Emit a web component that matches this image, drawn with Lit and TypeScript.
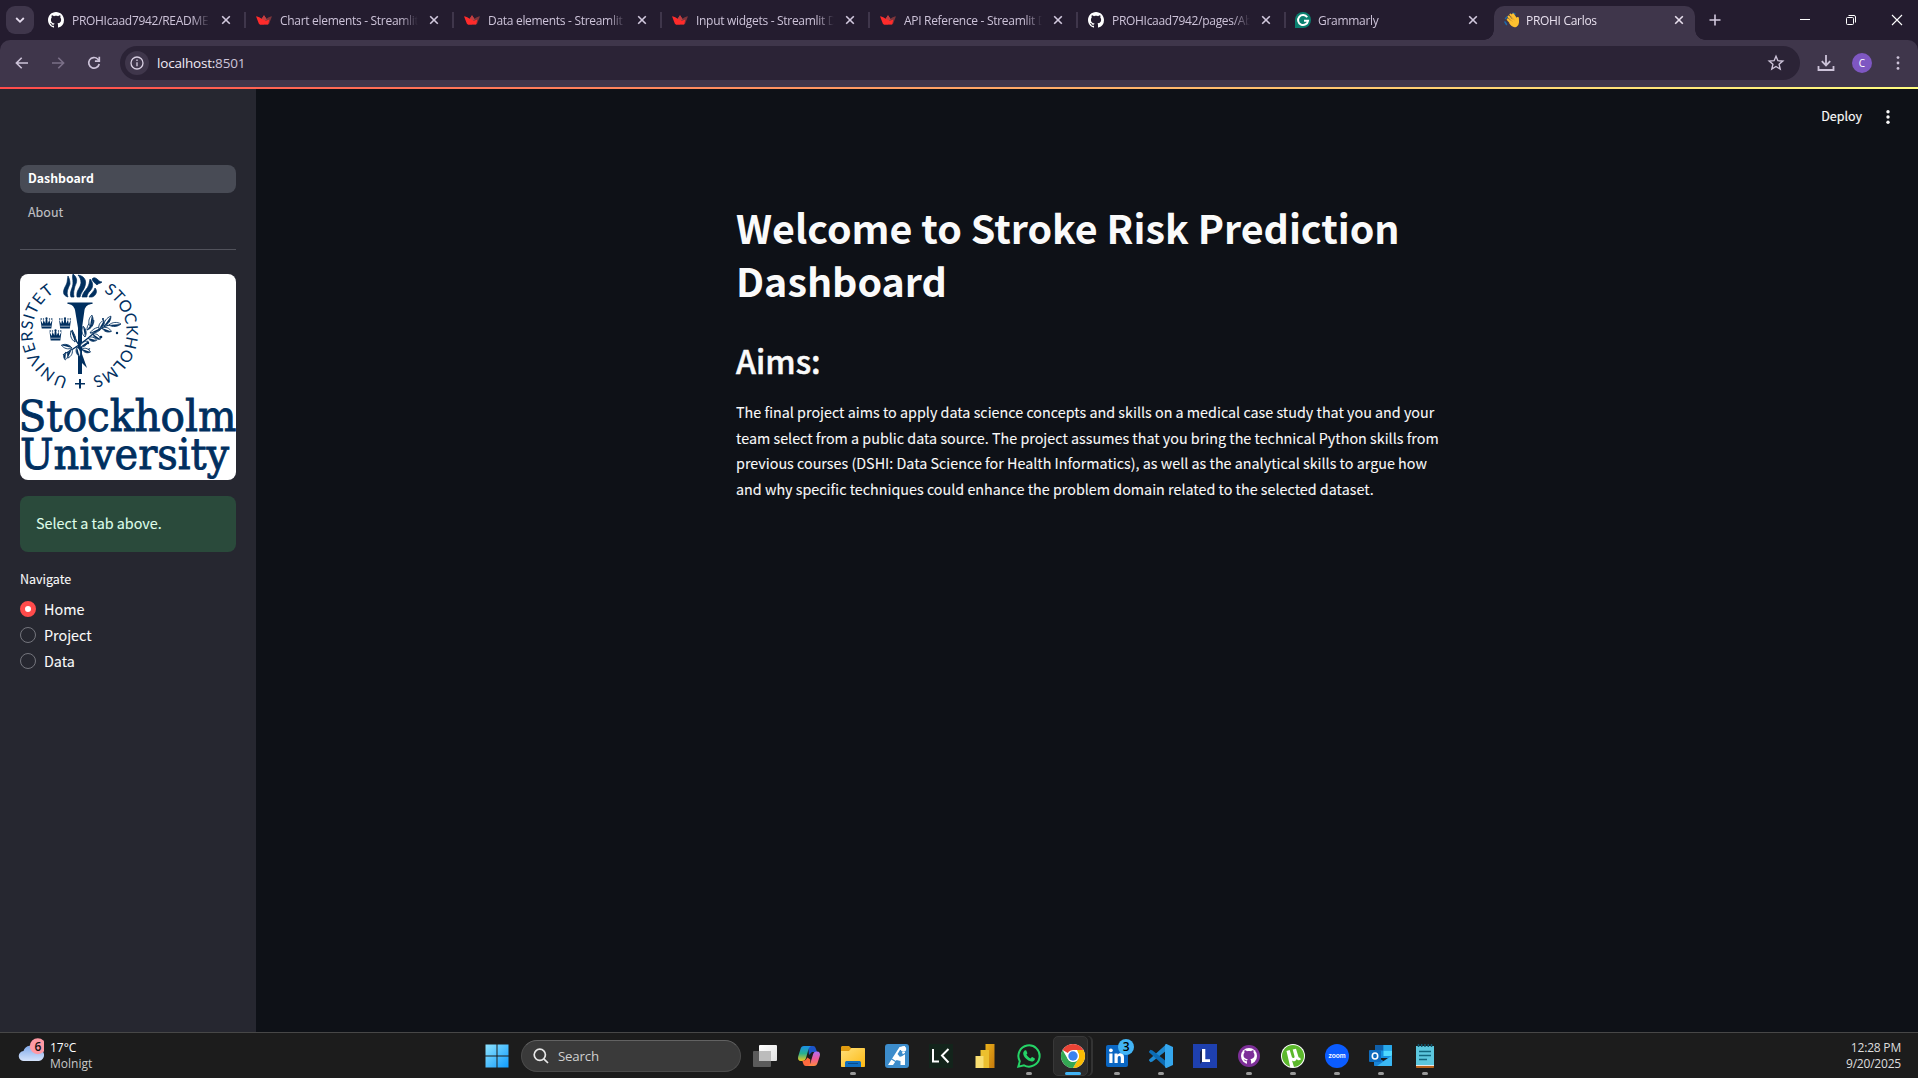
import { LitElement, html, css, svg, nothing } from "lit";
import { customElement } from "lit/decorators.js";
import { classMap } from "lit/directives/class-map.js";

const githubPath =
  "M8 0C3.58 0 0 3.58 0 8c0 3.54 2.29 6.53 5.47 7.59.4.07.55-.17.55-.38 0-.19-.01-.82-.01-1.49-2.01.37-2.53-.49-2.69-.94-.09-.23-.48-.94-.82-1.13-.28-.15-.68-.52-.01-.53.63-.01 1.08.58 1.23.82.72 1.21 1.87.87 2.33.66.07-.52.28-.87.51-1.07-1.78-.2-3.64-.89-3.64-3.95 0-.87.31-1.59.82-2.15-.08-.2-.36-1.02.08-2.12 0 0 .67-.21 2.2.82.64-.18 1.32-.27 2-.27s1.36.09 2 .27c1.53-1.04 2.2-.82 2.2-.82.44 1.1.16 1.92.08 2.12.51.56.82 1.27.82 2.15 0 3.07-1.87 3.75-3.65 3.95.29.25.54.73.54 1.48 0 1.07-.01 1.93-.01 2.2 0 .21.15.46.55.38A8.01 8.01 0 0 0 16 8c0-4.42-3.58-8-8-8Z";

const favicons: Record<string, unknown> = {
  github: svg`<path fill="#fff" d=${githubPath} />`,
  streamlit: svg`<path fill="#ff2b2b" d="M.5 4.2c2 .6 3.600 1.400 5.200 2.500L8 3.200l2.300 3.500L8 12.600H4.200c-.6 0-1.100-.3-1.300-.8L.2 4.700c-.1-.3 0-.5.3-.5Z"/><path fill="#7d353b" d="M15.500 4.200c-2 .6-3.600 1.400-5.200 2.500L8 12.600h3.800c.6 0 1.100-.3 1.300-.8l2.700-7.100c.1-.3 0-.5-.3-.5Z"/><path fill="#bd4043" d="M8 3.200 5.700 6.700l4.200 2.100.9-1.400Z"/><path fill="#ff2b2b" d="M2.500 7.500 9.500 9l3.800-1.500-1 4.400c-.2.500-.5.700-1 .7H4Z"/>`,
  grammarly: svg`<path fill="#0b8070" d="M0 16V8a8 8 0 1 1 8 8Z"/><path fill="none" stroke="#fff" stroke-width="2" d="M12.200 5.200A5 5 0 1 0 13 8.800H9"/>`,
  wave: svg`<path d="M1.500 6.500 3 5M1 10l1.500 2.500M9 1.200l2 .8" stroke="#1f6aa8" stroke-width="1.500" stroke-linecap="round"/><g stroke="#fdc02f" stroke-linecap="round" stroke-width="2.200"><path d="m4.600 4.600 4.500 5.400M6.500 2.600l4.400 5.600M9 2.300l3.400 5M3.800 7.500 8 12M13.800 6v4"/></g><path fill="#fdc02f" d="M6 9.500 11 5l3.700 2.500c.9 4-.5 7.200-3.500 7.700-2.500.3-4.500-1.600-5.900-3.600Z"/><path d="m6.600 3.400 4 5M4.900 5.600l3.700 4.300" stroke="#d9902a" stroke-width=".5" fill="none"/>`,
};

const tabs = [
  { icon: "github", title: "PROHIcaad7942/README.md" },
  { icon: "streamlit", title: "Chart elements - Streamlit Docs" },
  { icon: "streamlit", title: "Data elements - Streamlit Docs" },
  { icon: "streamlit", title: "Input widgets - Streamlit Docs" },
  { icon: "streamlit", title: "API Reference - Streamlit Docs" },
  { icon: "github", title: "PROHIcaad7942/pages/About.py" },
  { icon: "grammarly", title: "Grammarly" },
  { icon: "wave", title: "PROHI Carlos", active: true },
];

@customElement("browser-bar")
export class BrowserBar extends LitElement {
  static styles = css`
    :host {
      display: block;
      background: #241c2f;
      font-family: "Open Sans", "Noto Sans", sans-serif;
      color: #cdc3d9;
    }
    .strip {
      display: flex;
      height: 40px;
      padding-left: 6px;
      box-sizing: border-box;
    }
    .drop {
      width: 28px;
      height: 28px;
      margin-top: 6px;
      border-radius: 9px;
      background: #3f364b;
      display: grid;
      place-items: center;
    }
    .tab {
      box-sizing: border-box;
      width: 208px;
      height: 34px;
      margin-top: 6px;
      padding: 0 12px 6px 10px;
      display: flex;
      align-items: center;
      position: relative;
    }
    .drop + .tab {
      margin-left: 4px;
    }
    .tab.last {
      width: 207px;
      padding-left: 9px;
    }
    .tab.sep::after {
      content: "";
      position: absolute;
      right: 0;
      top: 6px;
      width: 2px;
      height: 16px;
      background: #3f364b;
    }
    .tab.active {
      background: #3f364b;
      border-radius: 10px 10px 0 0;
      width: 201px;
      margin-left: 1px;
      padding-left: 10px;
      padding-right: 8px;
      color: #e8e0ee;
    }
    .tab.active::before,
    .tab.active::after {
      content: "";
      position: absolute;
      bottom: 0;
      width: 10px;
      height: 10px;
    }
    .tab.active::before {
      left: -10px;
      background: radial-gradient(circle at 0 0, transparent 9.500px, #3f364b 10px);
    }
    .tab.active::after {
      right: -10px;
      background: radial-gradient(circle at 100% 0, transparent 9.500px, #3f364b 10px);
    }
    .fav {
      width: 16px;
      height: 16px;
      flex: none;
    }
    .title {
      flex: 1;
      margin: 2px 8px 0;
      overflow: hidden;
      white-space: nowrap;
      font-size: 12px;
      line-height: 18px;
      letter-spacing: -0.300px;
      -webkit-mask-image: linear-gradient(90deg, #000 calc(100% - 18px), transparent 100%);
      mask-image: linear-gradient(90deg, #000 calc(100% - 18px), transparent 100%);
    }
    .active .title {
      margin-left: 6px;
    }
    .last .title {
      margin-left: 7px;
    }
    .close {
      width: 16px;
      height: 16px;
      flex: none;
    }
    .plus {
      margin: 12px 0 0 12px;
    }
    .window {
      margin-left: auto;
      display: flex;
      gap: 30px;
      padding: 12px 13px 0 0;
    }
    .toolbar {
      box-sizing: border-box;
      height: 47px;
      background: #3f364b;
      border-radius: 10px 10px 0 0;
      padding: 0 10px 1px 12px;
      display: flex;
      align-items: center;
    }
    .nav {
      width: 20px;
      height: 20px;
      margin-right: 16px;
    }
    .omni {
      box-sizing: border-box;
      flex: 1;
      height: 34px;
      border-radius: 17px;
      background: #2b2336;
      display: flex;
      align-items: center;
      padding: 0 14px 0 5px;
      margin-right: 16px;
    }
    .info {
      width: 24px;
      height: 24px;
      border-radius: 50%;
      background: #3f364b;
      display: grid;
      place-items: center;
      margin-right: 8px;
    }
    .url {
      flex: 1;
      font-size: 13.500px;
      letter-spacing: -0.200px;
      color: #cdc3d9;
    }
    .host {
      color: #f1eaf5;
    }
    .tools {
      display: flex;
      align-items: center;
      gap: 16px;
    }
    .avatar {
      width: 20px;
      height: 20px;
      border-radius: 50%;
      background: #7e57c2;
      color: #fff;
      font-size: 10px;
      line-height: 20px;
      text-align: center;
    }
  `;

  render() {
    return html`
      <div class="strip">
        <div class="drop">
          <svg width="10" height="10" viewBox="0 0 10 10" fill="none" stroke="#e5dcee" stroke-width="1.800"><path d="m1.200 3 3.800 3.800L8.800 3" /></svg>
        </div>
        ${tabs.map(
          (t, i) => html`<div class=${classMap({ tab: true, active: !!t.active, sep: i < 6, last: i === 6 })}>
            <svg class="fav" viewBox="0 0 16 16">${favicons[t.icon]}</svg>
            <span class="title">${t.title}</span>
            <svg class="close" viewBox="0 0 16 16" fill="none" stroke=${t.active ? "#e8e0ee" : "#d2c9de"} stroke-width="1.600"><path d="m4.200 4.200 7.600 7.600M11.800 4.200l-7.600 7.600" /></svg>
          </div>`
        )}
        <svg class="plus" width="16" height="16" viewBox="0 0 16 16" stroke="#d2c9de" stroke-width="1.600"><path d="M8 2.500v11M2.500 8h11" /></svg>
        <div class="window">
          <svg width="16" height="16" viewBox="0 0 16 16" stroke="#fff"><path d="M3 7.500h10" /></svg>
          <svg width="16" height="16" viewBox="0 0 16 16" stroke="#fff" fill="none"><rect x="3.500" y="5.500" width="7" height="7" rx="1" /><path d="M5.500 3.500h5.500a1.500 1.500 0 0 1 1.500 1.500v5.500" /></svg>
          <svg width="16" height="16" viewBox="0 0 16 16" stroke="#fff" stroke-width="1.100"><path d="m3 3 10 10M13 3 3 13" /></svg>
        </div>
      </div>
      <div class="toolbar">
        <svg class="nav" viewBox="0 0 20 20" fill="none" stroke="#cdc3d9" stroke-width="1.600"><path d="M16 10H4.500M9.700 4.700 4.400 10l5.300 5.300" /></svg>
        <svg class="nav" viewBox="0 0 20 20" fill="none" stroke="#7b7088" stroke-width="1.600"><path d="M4 10h11.500M10.300 4.700l5.300 5.300-5.300 5.300" /></svg>
        <svg class="nav" viewBox="0 0 20 20" fill="none" stroke="#cdc3d9" stroke-width="1.700"><path d="M15.200 11A5.300 5.300 0 1 1 13.700 6L15 7.400" /><path d="M15.300 3.800v4.400h-4.400" /></svg>
        <div class="omni">
          <div class="info">
            <svg width="14" height="14" viewBox="0 0 14 14" fill="none" stroke="#d8cfe2" stroke-width="1.300"><circle cx="7" cy="7" r="6" /><path d="M7 6.300v4M7 3.500v1.500" /></svg>
          </div>
          <span class="url"><span class="host">localhost:</span>8501</span>
          <svg width="20" height="20" viewBox="0 0 20 20" fill="none" stroke="#cdc3d9" stroke-width="1.400"><path d="m10 3.200 1.900 4.500 4.900.4-3.700 3.200 1.100 4.800L10 13.500l-4.200 2.600 1.100-4.800-3.700-3.200 4.900-.4Z" /></svg>
        </div>
        <div class="tools">
          <svg width="20" height="20" viewBox="0 0 20 20" fill="none" stroke="#cdc3d9" stroke-width="1.800"><path d="M10 2v10M5.800 8.200l4.200 4.200 4.200-4.200M2.500 13v4h15v-4" /></svg>
          <div class="avatar">C</div>
          <svg width="20" height="20" viewBox="0 0 20 20" fill="#cdc3d9"><circle cx="10" cy="4.600" r="1.400" /><circle cx="10" cy="10" r="1.400" /><circle cx="10" cy="15.400" r="1.400" /></svg>
        </div>
      </div>
    `;
  }
}

const crown = svg`<path d="M0 2.500 2.200 7 3 2.800 4.800 6.600 5.300 1.500h1.400l.5 5.100L9 2.800 9.800 7 12 2.500 10.800 11.500H1.200Z"/><circle cx="6" cy="1.300" r="1.100"/><circle cx=".7" cy="2" r=".8"/><circle cx="11.300" cy="2" r=".8"/><circle cx="3" cy="2" r=".7"/><circle cx="9" cy="2" r=".7"/><path d="M1.300 9.200h9.400" stroke="#fff" stroke-width=".6"/>`;

const leaf = (x: number, y: number, angle: number, len = 9) =>
  svg`<g transform="translate(${x} ${y}) rotate(${angle})"><path d="M0 0C${len * 0.3} -2.800 ${len * 0.7} -2.600 ${len} 0C${len * 0.7} 2.600 ${len * 0.3} 2.800 0 0Z" fill="#fff" stroke="#002f5f" stroke-width=".8"/><path d="M0 0C${len * 0.4} 2.700 ${len * 0.7} 2.200 ${len} 0Z" fill="#002f5f"/></g>`;

@customElement("university-logo")
export class UniversityLogo extends LitElement {
  static styles = css`
    :host {
      display: block;
      height: 206px;
      border-radius: 8px;
      background: #fff;
      overflow: hidden;
    }
    svg {
      display: block;
    }
    .ring {
      font-family: Lato, sans-serif;
      font-size: 16px;
    }
    .name {
      font-family: "DejaVu Serif", serif;
      font-size: 43px;
      stroke: #002f5f;
      stroke-width: 0.900px;
    }
  `;

  render() {
    return html`<svg width="216" height="206" viewBox="0 0 216 206" fill="#002f5f">
      <defs>
        <path id="right" d="M83.700 17.700A47 47 0 0 1 70.900 103.600" />
        <path id="left" d="M48.100 103.600A47 47 0 0 1 35.300 17.700" />
      </defs>
      <text class="ring" textLength="109"><textPath href="#right" textLength="109">STOCKHOLMS</textPath></text>
      <text class="ring" textLength="109"><textPath href="#left" textLength="109">UNIVERSITET</textPath></text>
      <path d="M59 105h2v4h4v1.500h-4v4h-2v-4h-4v-1.500h4Z" />
      <path transform="translate(0 -1)" stroke="#002f5f" stroke-width=".7" d="M45 14c-3 6-1 9 3 10-2-5 0-8 2-13 0-4-1-6-2-8-1 4 0 6-3 11ZM51 24c-2-5 2-9 2-14 0-4-1-6 0-9 5 4 4 8 2 12-1 4-2 7-1 11ZM57 24c-1-7 3-8 4-14 0-3-1-6-3-8 6 1 9 5 7 11-1 4-4 6-5 11ZM62 24c1-6 6-8 7-13l1-5c4 4 3 9 0 12-2 2-3 4-3 6ZM69 24c1-3 5-5 6-9 3 3 1 8-3 9ZM72 6c4-4 6 3 10 3-2 2-4 1-5 3-2-2-4-3-5-6Z" />
      <path d="M47.500 28.500h25v1.500c-4 0-7 2-8 6L62 54v46h-4V54l-3-18c-1-4-4-6-7.500-6Z" />
      <g transform="translate(20.500 43)">${crown}</g>
      <g transform="translate(39 43)">${crown}</g>
      <g transform="translate(29.500 55)">${crown}</g>
      <path d="m62 80 5 14-5-5Z" />
      <path d="M43 81c9-5 20-12 31-22 8-7 15-9 24-9M52 56c3 5 2 9 8 17s8 1 10 2" fill="none" stroke="#002f5f" stroke-width="1.200" />
      ${leaf(65, 63, -100, 11)}${leaf(67, 56, -55, 12)}${leaf(70, 59, -25, 14)}${leaf(70, 52, -80, 11)}
      ${leaf(79, 55, -60, 10)}${leaf(84, 52, -55, 12)}${leaf(89, 51, -5, 12)}${leaf(82, 54, 20, 10)}
      ${leaf(73, 60, 35, 9)}${leaf(68, 64, 15, 9)}${leaf(55, 68, -110, 12)}${leaf(52, 74, -165, 11)}
      ${leaf(52, 75, 115, 10)}${leaf(57, 73, 75, 10)}${leaf(60, 73, -35, 10)}${leaf(62, 75, 20, 9)}${leaf(46, 78, 95, 8)}
      <circle cx="81" cy="63" r="1.300" /><circle cx="97" cy="59" r="1.200" /><circle cx="68" cy="69" r="1.200" /><circle cx="83" cy="45" r="1.100" />
      <text class="name" x="-1.500" y="157" textLength="218" lengthAdjust="spacingAndGlyphs">Stockholm</text>
      <text class="name" x="0" y="194.500" textLength="209" lengthAdjust="spacingAndGlyphs">University</text>
    </svg>`;
  }
}

@customElement("side-nav")
export class SideNav extends LitElement {
  static styles = css`
    :host {
      display: flex;
      flex-direction: column;
      box-sizing: border-box;
      width: 256px;
      flex: none;
      padding: 76px 20px 0;
      background: #262730;
      color: #fafafa;
      font-family: "Noto Sans CJK SC", sans-serif;
      -webkit-text-stroke: 0.080px currentColor;
    }
    .link {
      box-sizing: border-box;
      height: 28px;
      line-height: 26px;
      padding-left: 8px;
      border-radius: 8px;
      font-size: 12.500px;
      color: #c0c1c6;
      margin-bottom: 6px;
    }
    .current {
      background: #484b55;
      color: #fff;
      font-weight: 700;
      font-size: 12.300px;
      -webkit-text-stroke: 0;
    }
    hr {
      width: 100%;
      height: 1px;
      border: 0;
      background: #51525b;
      margin: 16px 0 24px;
    }
    .note {
      margin-top: 16px;
      height: 56px;
      box-sizing: border-box;
      padding-left: 16px;
      border-radius: 8px;
      background: #2a4a3b;
      color: #dffde9;
      font-size: 14.350px;
      line-height: 54px;
    }
    .label {
      margin: 19px 0 9px;
      font-size: 12.500px;
      line-height: 16px;
    }
    .option {
      display: flex;
      align-items: center;
      gap: 8px;
      height: 26px;
      font-size: 14.350px;
      line-height: 24px;
    }
    .dot {
      box-sizing: border-box;
      width: 16px;
      height: 16px;
      border-radius: 50%;
      border: 1px solid #74757d;
    }
    .picked {
      border: 5px solid #ff4b4b;
      background: #fff;
    }
  `;

  render() {
    return html`
      <div class="link current">Dashboard</div>
      <div class="link">About</div>
      <hr />
      <university-logo></university-logo>
      <div class="note">Select a tab above.</div>
      <div class="label">Navigate</div>
      ${["Home", "Project", "Data"].map(
        (name, i) => html`<div class="option"><span class=${classMap({ dot: true, picked: i === 0 })}></span><span>${name}</span></div>`
      )}
    `;
  }
}

@customElement("main-page")
export class MainPage extends LitElement {
  static styles = css`
    :host {
      flex: 1;
      display: flex;
      flex-direction: column;
      background: #0e1117;
      color: #fafafa;
      font-family: "Noto Sans CJK SC", sans-serif;
    }
    .top {
      display: flex;
      justify-content: flex-end;
      align-items: center;
      gap: 16px;
      height: 56px;
      padding-right: 20px;
      font-size: 12.500px;
    }
    .deploy {
      line-height: 20px;
      padding-bottom: 3px;
      -webkit-text-stroke: 0.150px currentColor;
    }
    .content {
      width: 736px;
      padding: 56px 0 0 480px;
    }
    h1 {
      margin: 0;
      font-size: 39.400px;
      line-height: 52.800px;
      font-weight: 700;
      white-space: nowrap;
    }
    h2 {
      margin: 32px 0 17px;
      font-size: 32.200px;
      line-height: 43.200px;
      font-weight: 500;
      -webkit-text-stroke: 0.500px currentColor;
    }
    p {
      margin: 0;
      font-size: 14.335px;
      line-height: 25.700px;
      white-space: nowrap;
      -webkit-text-stroke: 0.080px currentColor;
    }
  `;

  render() {
    return html`
      <div class="top">
        <span class="deploy">Deploy</span>
        <svg width="20" height="20" viewBox="0 0 20 20" fill="#fafafa"><circle cx="10" cy="4.800" r="1.700" /><circle cx="10" cy="10" r="1.700" /><circle cx="10" cy="15.200" r="1.700" /></svg>
      </div>
      <div class="content">
        <h1>Welcome to Stroke Risk Prediction<br />Dashboard</h1>
        <h2>Aims:</h2>
        <p>
          The final project aims to apply data science concepts and skills on a medical case study that you and your<br />
          team select from a public data source. The project assumes that you bring the technical Python skills from<br />
          previous courses (DSHI: Data Science for Health Informatics), as well as the analytical skills to argue how<br />
          and why specific techniques could enhance the problem domain related to the selected dataset.
        </p>
      </div>
    `;
  }
}

const apps: { art: unknown; open?: boolean; front?: boolean }[] = [
  {
    art: svg`<defs><linearGradient id="tv" x1="0" y1="0" x2="1" y2="1"><stop offset="0" stop-color="#fff"/><stop offset="1" stop-color="#e2e2e2"/></linearGradient></defs><rect x="6" y="1" width="18" height="16" rx="1" fill="url(#tv)"/><rect x="0" y="7" width="18" height="16" rx="1" fill="#5b5b5b"/><path d="M6 7h12v10H6Z" fill="#bcbcbc"/>`,
  },
  {
    art: svg`<defs><linearGradient id="ca" x1="0" y1="0" x2="0" y2="1"><stop offset="0" stop-color="#1a8fe8"/><stop offset=".5" stop-color="#28b08f"/><stop offset="1" stop-color="#f0c91c"/></linearGradient><linearGradient id="cb" x1="0" y1="0" x2="0" y2="1"><stop offset="0" stop-color="#b06df5"/><stop offset=".5" stop-color="#ee5a9a"/><stop offset="1" stop-color="#ff8a3c"/></linearGradient></defs><path fill="#1b54c8" d="M11 2h5c2 0 2.500 1.500 3 3l1 3h-5l-3 3Z"/><path fill="url(#ca)" d="M7 2h7c-2 1-2.500 3-3 5l-2 7c-.6 2-1.600 3-3.500 3H4c-2.500 0-3.500-2-2.800-4.500L3.500 5C4.100 3 5 2 7 2Z"/><path fill="#ff6a3d" d="M13 22H9c-2 0-2.500-1.500-3-3l-.7-2.500c3 .5 4-.8 5-3l3 2Z"/><path fill="url(#cb)" d="M17 22h-6c2-1 2.500-3 3-5l2-6.500C16.600 8.500 17.500 7.500 19.500 7.500H20c2.500 0 3.500 2 2.800 4.500L20.500 19c-.6 2-1.500 3-3.500 3Z"/>`,
  },
  {
    art: svg`<defs><linearGradient id="fo" x1="0" y1="0" x2="1" y2="1"><stop offset="0" stop-color="#ffe07a"/><stop offset="1" stop-color="#fdb913"/></linearGradient></defs><path fill="#e09b10" d="M0 3.500C0 2.600.6 2 1.500 2H8l2 2h4v4H0Z"/><path fill="url(#fo)" d="M0 7h8l2.500-3H23c.6 0 1 .4 1 1v17c0 .6-.4 1-1 1H1c-.6 0-1-.4-1-1Z"/><path fill="#0f6fc0" d="M4 23v-4.500C4 17.500 5 17 6 17h12c1 0 2 .5 2 1.500V23Z"/><path stroke="#0a4b86" d="M7 19.500h10"/>`,
    open: true,
  },
  {
    art: svg`<rect width="24" height="24" rx="3" fill="#3c8ccb"/><path fill="#fff" d="M3 21 14.500 3 20 2v19h-4.500v-4l-4-1-3.500 5Z"/><path fill="#3c8ccb" d="m15 6-2.500 4 2.500 3 3-2-1-3h4V6Z"/><circle cx="18.500" cy="5" r="2.700" fill="#fff"/><path stroke="#3c8ccb" stroke-width="1.300" d="m5 14 8 5M16 12l5-3"/>`,
  },
  {
    art: svg`<rect width="24" height="24" fill="#13241b"/><path fill="none" stroke="#fff" stroke-width="2" d="M4 5v12.500h6M19.500 5 13 11.500l6.500 7"/>`,
  },
  {
    art: svg`<defs><linearGradient id="pb" x1="0" y1="0" x2="1" y2="1"><stop offset="0" stop-color="#e9b11b"/><stop offset="1" stop-color="#c77a0c"/></linearGradient></defs><path fill="url(#pb)" d="M12.500 0h9v24h-9Z"/><path fill="#ecc02f" d="M7.500 6h8.500v18H7.500Z"/><path fill="#f9df72" d="M2.500 12h8v12h-8Z"/>`,
  },
  {
    art: svg`<path fill="none" stroke="#25d366" stroke-width="2" d="m1.300 22.700 1.500-5.500A10.600 10.600 0 1 1 7 21.300Z"/><path fill="#25d366" d="M8.500 6.200c.4 0 .7 0 .9.500l.9 2.200c.2.500-.6 1.300-.9 1.700 1 1.900 2.300 3 4.200 3.900.5-.4 1.200-1.600 1.600-1.400l2.300 1.100c.5.200.4.900.2 1.500-.5 1.300-2 1.900-3.200 1.700-4.200-.7-7.900-4.400-8.300-7.700-.1-1.400.9-3.500 2.300-3.500Z"/>`,
    open: true,
  },
  {
    art: svg`<circle cx="12" cy="12" r="12" fill="#fff"/><path fill="#ea4335" d="M12 12 1.600 6A12 12 0 0 1 22.400 6H12Z"/><path fill="#fbbc04" d="M22.400 6A12 12 0 0 1 12 24l5.200-9A6 6 0 0 0 17.200 9L16 6Z"/><path fill="#34a853" d="M12 24A12 12 0 0 1 1.600 6l5.200 9A6 6 0 0 0 15 17.200l2.200-2.200Z"/><circle cx="12" cy="12" r="6" fill="#fff"/><circle cx="12" cy="12" r="4.700" fill="#3b82f0"/>`,
    open: true,
    front: true,
  },
  {
    art: svg`<rect x="1" y="1" width="22" height="22" rx="2" fill="#0a66c2"/><path fill="#fff" d="M4.300 9.500h3.200V19H4.300ZM9.500 9.500h3v1.300c.6-1 1.600-1.500 3-1.500 2.900 0 3.500 1.900 3.500 4.400V19h-3.200v-4.700c0-1.200-.1-2.300-1.500-2.300s-1.600 1.100-1.600 2.300V19H9.500Z"/><circle cx="5.900" cy="6.300" r="1.900" fill="#fff"/><circle cx="21" cy="3" r="8" fill="#42b4f5"/><text x="21" y="7.300" text-anchor="middle" font-size="12" font-weight="600" font-family="Open Sans" fill="#000">3</text>`,
    open: true,
  },
  {
    art: svg`<path fill="#1f8ad2" d="M17.500 0v6.500L3.500 17.500 1.500 18.300 0 16.500v-.8Z"/><path fill="#0c6cb5" d="M17.500 24v-6.500L3.500 6.500 1.500 5.700 0 7.500v.8Z"/><path fill="#35a7ee" d="M17.500 0 24 3v18l-6.500 3c-1 0-1.500-.7-1.500-1.500v-21C16 .7 16.500 0 17.500 0Z"/>`,
    open: true,
  },
  {
    art: svg`<rect width="24" height="24" fill="#1e40af"/><path fill="#172554" d="m9 18-2 2V8l2-3Z"/><path fill="#fff" d="M9 5h3.300v10.300H17V18H9Z"/>`,
  },
  {
    art: svg`<circle cx="12" cy="12" r="11" fill="#7d2f98"/><circle cx="12" cy="12" r="8" fill="#fff"/><path fill="#7d2f98" d="M10 20v-2.700c-2.500.2-2.500-1.300-3.500-1.700 2.200-.6 1.800 1.500 3.600.8l.6-1.100c-5.200-.6-4.600-5.500-3.200-6.500-.3-.8-.2-1.900.2-2.500 1 0 1.700.5 2.200.9 1.500-.3 2.700-.3 4.200 0 .5-.4 1.300-.9 2.200-.9.400.6.500 1.700.2 2.500 1.400 1 2 5.900-3.200 6.500.7.600.8 1.200.8 2.200V20Z"/>`,
    open: true,
  },
  {
    art: svg`<circle cx="12" cy="12" r="12" fill="#fff"/><circle cx="12" cy="12" r="11" fill="#5cb82c"/><path fill="#fff" d="m5.500 7 3.200-1 2.200 7c.6 1.800 3.100 1.200 2.600-.8L11.700 5.500 15 4.700l2.500 8.300c.2.800 1 .9 1.700.7l.6 2c-1.800.8-3.300.5-4-.8-1 2.300-3.500 2.900-4.800 1.600l2 6.500-3.700.5Z"/>`,
    open: true,
  },
  {
    art: svg`<circle cx="12" cy="12" r="12" fill="#0b5cff"/><text x="12" y="14.300" text-anchor="middle" font-size="7" font-weight="700" textLength="17" font-family="Lato" fill="#fff">zoom</text>`,
    open: true,
  },
  {
    art: svg`<rect x="6" y="1" width="17" height="13" rx="1" fill="#1490df"/><path fill="#0f5fa9" d="M6 1h8.500v5.500H6Z"/><path fill="#50d9ff" d="M14.500 6.500H23V12h-8.500Z"/><path fill="#28a8ea" d="M14.500 1H22c.6 0 1 .4 1 1v4.500h-8.500Z"/><path fill="#1784d8" d="M5 11.500 14.500 17 23 11.500V21c0 .6-.4 1-1 1H6c-.6 0-1-.4-1-1Z"/><path fill="#3bb8f3" d="m23 11.500-15 10.500H22c.6 0 1-.4 1-1Z"/><rect x="0" y="6" width="12" height="12" rx="1" fill="#0f6cbd"/><ellipse cx="6" cy="12" rx="2.700" ry="3" fill="none" stroke="#fff" stroke-width="1.600"/>`,
    open: true,
  },
  {
    art: svg`<path fill="#b7611b" d="M3 20h18v3c0 .6-.4 1-1 1H4c-.6 0-1-.4-1-1Z"/><path fill="#e8e8e8" d="M3 19h18v3H3Z"/><path fill="#5cc7de" d="M3 2h18v19H3Z"/><path stroke="#12677f" stroke-width="1.500" d="M6 7.500h12M6 11.500h12M6 15.500h8"/><path stroke="#0f556b" stroke-width="1.500" d="M5.500 0v3M8.700 0v3M12 0v3M15.300 0v3M18.500 0v3"/>`,
    open: true,
  },
];

@customElement("task-bar")
export class TaskBar extends LitElement {
  static styles = css`
    :host {
      box-sizing: border-box;
      display: grid;
      grid-template-columns: 484.500px 1fr auto;
      height: 46px;
      border-top: 1px solid #474747;
      background: #1c1c1c;
      color: #fff;
      font-family: "Open Sans", "Noto Sans", sans-serif;
      font-size: 12px;
      line-height: 16px;
      letter-spacing: -0.200px;
    }
    .weather {
      display: flex;
      gap: 6px;
      padding: 5px 0 0 18px;
      letter-spacing: 0;
    }
    .lines {
      padding-top: 2px;
    }
    .dim {
      color: #c8c8c8;
    }
    .center {
      display: flex;
      align-items: center;
    }
    .search {
      box-sizing: border-box;
      width: 220px;
      height: 32px;
      margin: 0 2px 0 12.500px;
      border: 1px solid #4b4b4b;
      border-top-color: #626262;
      border-radius: 16px;
      background: #3a3a3a;
      display: flex;
      align-items: center;
      gap: 9px;
      padding-left: 11px;
      font-size: 13.300px;
      color: #cfcfcf;
    }
    .app {
      width: 44px;
      height: 45px;
      display: grid;
      grid-template-rows: 39px 6px;
      justify-items: center;
    }
    .tile {
      width: 36px;
      height: 40px;
      margin-top: 3px;
      display: grid;
      place-items: center;
      border-radius: 5px;
    }
    .front .tile {
      box-sizing: border-box;
      width: 35px;
      margin-right: 5px;
      padding-left: 5px;
      background: #2b2b2b;
      border: 1px solid #383838;
      box-shadow: 3px 0 0 #1c1c1c, 5px 0 0 #333;
    }
    .tile svg {
      margin-bottom: 1px;
      overflow: visible;
    }
    .mark {
      width: 6px;
      height: 3px;
      border-radius: 2px;
      background: #9a9a9a;
      z-index: 1;
    }
    .front .mark {
      width: 16px;
      background: #42b4f5;
    }
    .clock {
      padding: 7px 17px 0 0;
      text-align: right;
      color: #dedede;
    }
  `;

  render() {
    return html`
      <div class="weather">
        <svg width="26" height="30" viewBox="0 0 26 30">
          <defs><linearGradient id="cl" x1="0" y1="0" x2="0" y2="1"><stop offset="0" stop-color="#7fa9ea" /><stop offset="1" stop-color="#d5e3fb" /></linearGradient></defs>
          <path fill="url(#cl)" d="M6 23a5 5 0 0 1-.5-10A7.500 7.500 0 0 1 19 11a6 6 0 0 1 2 12Z" />
          <circle cx="19.800" cy="8.200" r="8" fill="#ff99a4" />
          <text x="20" y="12.500" text-anchor="middle" font-size="12" font-weight="600" fill="#111">6</text>
        </svg>
        <div class="lines"><div>17°C</div><div class="dim">Molnigt</div></div>
      </div>
      <div class="center">
        <svg width="24" height="24" viewBox="0 0 24 24">
          <defs><linearGradient id="wn" x1="0" y1="0" x2="1" y2="1"><stop offset="0" stop-color="#8ee3ff" /><stop offset="1" stop-color="#0f9bfd" /></linearGradient></defs>
          <path fill="url(#wn)" d="M.5.500h11v11H.5ZM12.500.500h11v11h-11ZM.5 12.500h11v11H.5ZM12.500 12.500h11v11h-11Z" />
        </svg>
        <div class="search">
          <svg width="16" height="16" viewBox="0 0 16 16" fill="none" stroke="#e8e8e8" stroke-width="1.700"><circle cx="6.800" cy="6.800" r="5.600" /><path d="m10.800 10.800 4.200 4.200" /></svg>
          <span>Search</span>
        </div>
        ${apps.map(
          (a) => html`<div class=${classMap({ app: true, front: !!a.front })}>
            <div class="tile"><svg width="24" height="24" viewBox="0 0 24 24">${a.art}</svg></div>
            ${a.open ? html`<span class="mark"></span>` : nothing}
          </div>`
        )}
      </div>
      <div class="clock"><div>12:28 PM</div><div>9/20/2025</div></div>
    `;
  }
}

@customElement("app-root")
export class AppRoot extends LitElement {
  static styles = css`
    :host {
      display: flex;
      flex-direction: column;
      height: 1078px;
      width: 1918px;
      overflow: hidden;
    }
    .line {
      height: 2px;
      background: linear-gradient(90deg, #ff4b4b, #fffd80);
    }
    .body {
      flex: 1;
      display: flex;
      min-height: 0;
    }
  `;

  render() {
    return html`
      <browser-bar></browser-bar>
      <div class="line"></div>
      <div class="body"><side-nav></side-nav><main-page></main-page></div>
      <task-bar></task-bar>
    `;
  }
}
